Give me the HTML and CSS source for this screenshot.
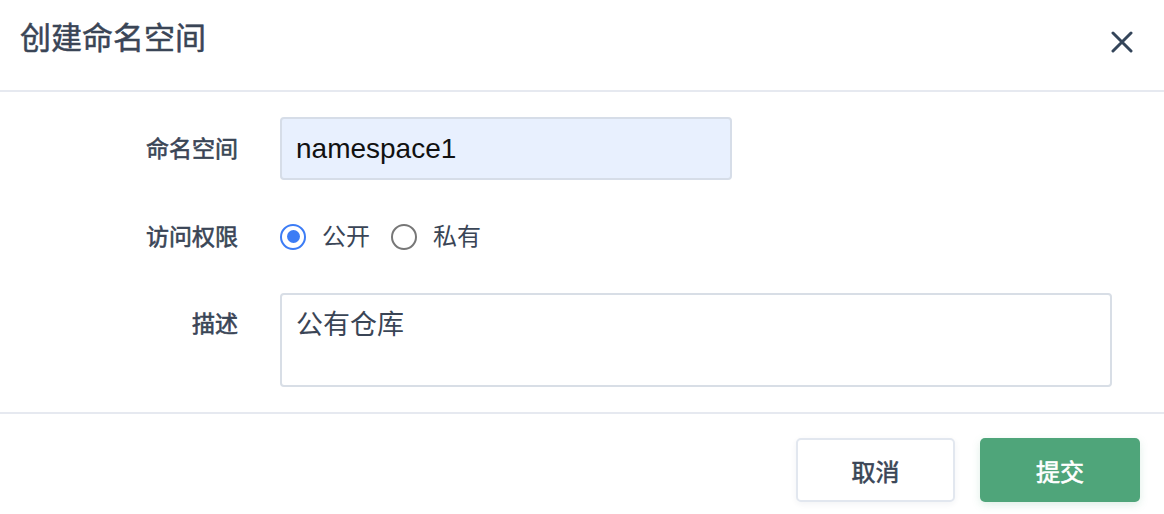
FILE: index.html
```html
<!DOCTYPE html>
<html lang="zh">
<head>
<meta charset="utf-8">
<title>创建命名空间</title>
<link rel="stylesheet" href="styles.css">
</head>
<body>
<div class="dialog">
  <header class="dlg-header">
    <h1 class="dlg-title">创建命名空间</h1>
    <button class="dlg-close" aria-label="关闭">
      <svg width="22" height="22" viewBox="0 0 22 22"><path d="M2 2 L20 20 M20 2 L2 20" stroke="#34455a" stroke-width="3" stroke-linecap="round" fill="none"/></svg>
    </button>
  </header>
  <main class="dlg-body">
    <div class="row row-input">
      <label class="lbl">命名空间</label>
      <div class="field"><div class="input">namespace1</div></div>
    </div>
    <div class="row row-radio">
      <label class="lbl">访问权限</label>
      <div class="field radios">
        <span class="radio checked"><span class="dot"></span></span><span class="rtext">公开</span>
        <span class="radio"></span><span class="rtext">私有</span>
      </div>
    </div>
    <div class="row row-text">
      <label class="lbl lbl-top">描述</label>
      <div class="field grow"><div class="textarea">公有仓库</div></div>
    </div>
  </main>
  <footer class="dlg-footer">
    <button class="btn btn-cancel">取消</button>
    <button class="btn btn-submit">提交</button>
  </footer>
</div>
</body>
</html>
```

FILE: styles.css
```css
* { box-sizing: border-box; }
html, body { margin: 0; padding: 0; background: #fff; }
body {
  font-family: "Liberation Sans", "Noto Sans CJK SC", sans-serif;
  color: #3a4556;
  width: 1164px;
  height: 514px;
  overflow: hidden;
}
.dialog { display: flex; flex-direction: column; height: 514px; }
.dlg-header {
  height: 92px;
  border-bottom: 2px solid #e6e9f0;
  display: flex;
  align-items: center;
  justify-content: space-between;
  padding: 0 31px 0 20px;
}
.dlg-title {
  margin: 0;
  font-size: 31px;
  font-weight: 400;
  -webkit-text-stroke: 0.5px #3a4556;
  line-height: 36px;
  color: #3a4556;
  position: relative;
  top: -6px;
}
.dlg-close {
  border: 0; background: none; padding: 0;
  width: 22px; height: 22px;
  display: flex;
  position: relative; top: -3px;
}
.dlg-body {
  padding: 25px 52px 25px 0;
  display: flex;
  flex-direction: column;
  gap: 25px;
  border-bottom: 2px solid #e6e9f0;
}
.row { display: flex; align-items: center; }
.row-text { align-items: flex-start; }
.lbl {
  width: 238px;
  text-align: right;
  font-size: 23px;
  font-weight: 400;
  -webkit-text-stroke: 0.6px #3a4556;
  line-height: 30px;
  color: #3a4556;
  flex: none;
}
.lbl-top { padding-top: 16px; }
.field { margin-left: 42px; }
.grow { flex: 1; }
.input {
  width: 452px;
  height: 63px;
  border: 2px solid #d6dde8;
  border-radius: 4px;
  background: #e8f0fe;
  padding: 0 14px;
  display: flex;
  align-items: center;
  font-size: 28px;
  color: #111;
  font-family: "Liberation Sans", sans-serif;
}
.radios { display: flex; align-items: center; height: 63px; }
.radio {
  width: 26px; height: 26px;
  border: 2px solid #777;
  border-radius: 50%;
  display: flex; align-items: center; justify-content: center;
  flex: none;
}
.radio.checked { border-color: #3c7cf5; }
.dot { width: 13px; height: 13px; border-radius: 50%; background: #3c7cf5; }
.rtext {
  margin-left: 16px;
  margin-right: 21px;
  font-size: 24px;
  line-height: 30px;
  color: #3a4556;
}
.textarea {
  height: 94px;
  border: 2px solid #d8dee6;
  border-radius: 4px;
  padding: 13px 14px;
  font-size: 27px;
  line-height: 34px;
  color: #3a4556;
}
.dlg-footer {
  flex: 1;
  display: flex;
  justify-content: flex-end;
  align-items: flex-start;
  gap: 25px;
  padding: 24px 24px 0 0;
}
.btn {
  height: 64px;
  border-radius: 5px;
  font-family: "Liberation Sans", "Noto Sans CJK SC", sans-serif;
  font-size: 24px;
  font-weight: 400;
  cursor: pointer;
}
.btn-cancel {
  width: 159px;
  background: #fff;
  border: 2px solid #e2e7ef;
  color: #3a4556;
  -webkit-text-stroke: 0.6px #3a4556;
  box-shadow: 0 2px 6px rgba(30, 50, 90, 0.06);
}
.btn-submit {
  width: 160px;
  background: #4fa57a;
  border: 0;
  color: #fff;
  -webkit-text-stroke: 0.6px #fff;
  box-shadow: 0 3px 8px rgba(79, 165, 122, 0.18);
}
```
